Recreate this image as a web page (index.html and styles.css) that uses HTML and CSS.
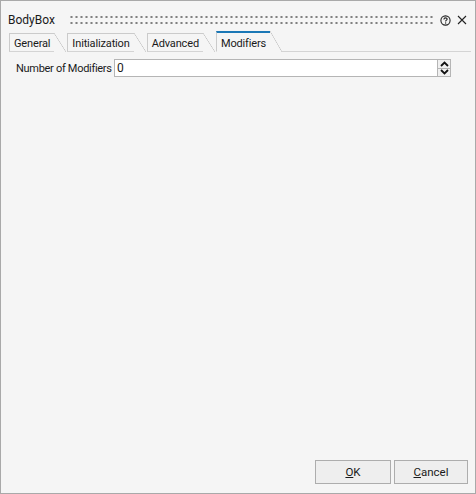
FILE: index.html
```html
<!DOCTYPE html>
<html>
<head>
<meta charset="utf-8">
<link rel="stylesheet" href="styles.css">
</head>
<body>
<div class="window">
  <div class="titlebar">
    <span class="title">BodyBox</span>
    <span class="grip"></span>
    <svg class="help" width="11" height="11" viewBox="0 0 11 11">
      <circle cx="5.5" cy="5.5" r="4.6" fill="none" stroke="#222" stroke-width="1.1"/>
      <path d="M3.9 4.4 C3.9 3.4 4.6 2.9 5.5 2.9 C6.4 2.9 7.1 3.4 7.1 4.2 C7.1 5.1 5.6 5.3 5.6 6.5" fill="none" stroke="#222" stroke-width="1.1"/>
      <rect x="5" y="7.4" width="1.2" height="1.2" fill="#222"/>
    </svg>
    <svg class="close" width="10" height="10" viewBox="0 0 10 10">
      <path d="M1 1 L9 9 M9 1 L1 9" stroke="#222" stroke-width="1.1"/>
    </svg>
  </div>
  <div class="tabs">
    <div class="tab">General</div>
    <div class="tab">Initialization</div>
    <div class="tab">Advanced</div>
    <div class="tab active">Modifiers</div>
    <div class="tabfill"></div>
  </div>
  <div class="panel">
    <div class="row">
      <label class="label">Number of Modifiers</label>
      <div class="spinbox">
        <div class="input">0</div>
        <div class="spin">
          <div class="spinbtn">
            <svg width="9" height="6" viewBox="0 0 9 6"><path d="M1 5 L4.5 1.5 L8 5" fill="none" stroke="#111" stroke-width="1.8"/></svg>
          </div>
          <div class="spinbtn">
            <svg width="9" height="6" viewBox="0 0 9 6"><path d="M1 1 L4.5 4.5 L8 1" fill="none" stroke="#111" stroke-width="1.8"/></svg>
          </div>
        </div>
      </div>
    </div>
  </div>
  <div class="footer">
    <button class="btn"><u>O</u>K</button>
    <button class="btn"><u>C</u>ancel</button>
  </div>
</div>
</body>
</html>
```
FILE: styles.css
```css
html, body {
  margin: 0;
  padding: 0;
  background: #f5f5f5;
}
.window {
  width: 476px;
  height: 494px;
  box-sizing: border-box;
  border: 1px solid #a9a9a9;
  background: #f5f5f5;
  display: flex;
  flex-direction: column;
  font-family: "Roboto", "Liberation Sans", sans-serif;
  font-size: 11px;
  color: #1a1a1a;
}
.titlebar {
  height: 30px;
  box-sizing: border-box;
  display: flex;
  align-items: center;
  padding: 8px 8px 0 7px;
}
.title {
  font-size: 12px;
  line-height: 16px;
}
.grip {
  flex: 1;
  height: 12px;
  margin: 0 7px 0 14px;
  background-image: radial-gradient(circle, #808080 1px, transparent 1.25px);
  background-size: 5px 6px;
  background-position: 0 0;
}
.help {
  margin-right: 6px;
  display: block;
}
.close {
  display: block;
}
.tabs {
  display: flex;
  align-items: flex-end;
  height: 21px;
  padding-left: 8px;
}
.tab {
  position: relative;
  height: 19px;
  box-sizing: border-box;
  border-left: 1px solid #cbcbcb;
  border-top: 1px solid #cbcbcb;
  border-bottom: 1px solid #d4d4d4;
  padding: 2px 4px 0 4px;
  margin-right: 12px;
  line-height: 15px;
  white-space: nowrap;
  letter-spacing: -0.15px;
}
.tab::after {
  content: "";
  position: absolute;
  top: -1px;
  right: -12px;
  width: 12px;
  height: 19px;
  background: linear-gradient(to top right, transparent calc(50% - 0.6px), #c4c4c4 50%, transparent calc(50% + 0.6px));
}
.tab + .tab {
  margin-left: 1px;
}
.tab.active {
  height: 21px;
  border-top: 2px solid #1b78b6;
  border-bottom: 1px solid transparent;
  padding-top: 3px;
}
.tab.active::after {
  top: -2px;
  height: 21px;
}
.tabfill {
  flex: 1;
  height: 0;
  border-bottom: 1px solid #d4d4d4;
  margin-right: 4px;
}
.panel {
  flex: 1;
  padding: 7px 24px 0 15px;
}
.row {
  display: flex;
  align-items: center;
  height: 18px;
}
.label {
  width: 98px;
  white-space: nowrap;
  letter-spacing: -0.3px;
}
.spinbox {
  flex: 1;
  display: flex;
  height: 18px;
}
.input {
  flex: 1;
  background: #fff;
  border: 1px solid #b5b5b5;
  box-sizing: border-box;
  padding: 0 0 0 2px;
  line-height: 16px;
  font-size: 12px;
}
.spin {
  width: 13px;
  display: flex;
  flex-direction: column;
}
.spinbtn {
  flex: 1;
  border: 1px solid #b5b5b5;
  border-left: none;
  box-sizing: border-box;
  background: #f0f0f0;
  display: flex;
  align-items: center;
  justify-content: center;
}
.spinbtn + .spinbtn {
  border-top: none;
}
.spinbtn svg {
  display: block;
}
.footer {
  display: flex;
  justify-content: flex-end;
  gap: 3px;
  padding: 0 7px 9px 0;
}
.btn {
  width: 76px;
  height: 24px;
  box-sizing: border-box;
  border: 1px solid #adadad;
  background: #eeeeee;
  font-family: "Roboto", "Liberation Sans", sans-serif;
  font-size: 11.5px;
  color: #1a1a1a;
  padding: 0;
}
.btn + .btn {
  width: 74px;
}
```
